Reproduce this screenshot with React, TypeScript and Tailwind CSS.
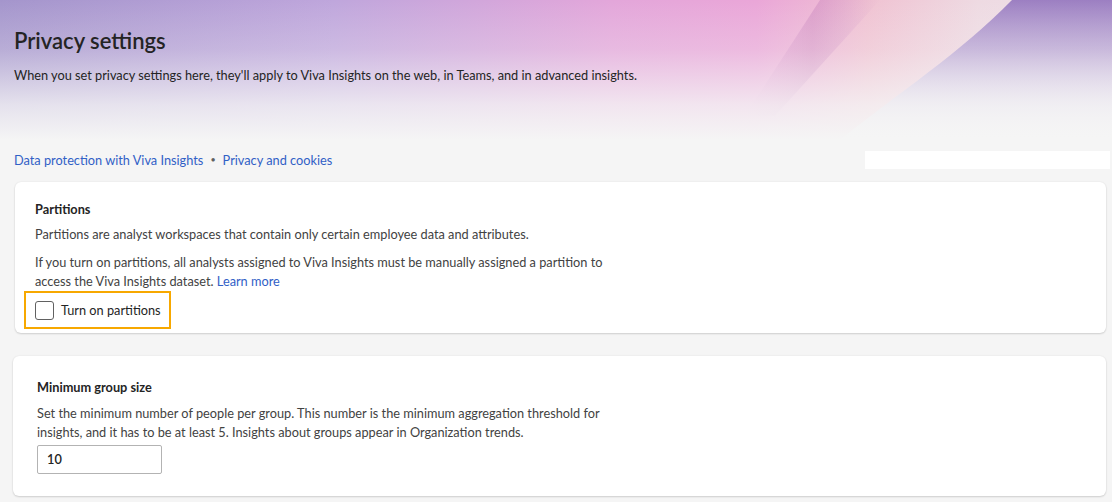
import React from "react";

function HeroBackground() {
  return (
    <svg
      className="absolute inset-0 h-full w-full"
      viewBox="0 0 1112 145"
      preserveAspectRatio="none"
      aria-hidden="true"
    >
      <defs>
        <linearGradient id="hx" x1="0" y1="0" x2="1" y2="0">
          <stop offset="0" stopColor="#a495cc" />
          <stop offset="0.3" stopColor="#bfa6dc" />
          <stop offset="0.55" stopColor="#e3a6da" />
          <stop offset="0.68" stopColor="#eaa6d8" />
          <stop offset="0.78" stopColor="#f0c2d2" />
          <stop offset="0.88" stopColor="#eedae2" />
          <stop offset="1" stopColor="#ece0e8" />
        </linearGradient>
        <linearGradient id="streak" x1="0" y1="0" x2="1" y2="0">
          <stop offset="0" stopColor="#c07cc0" stopOpacity="0" />
          <stop offset="0.5" stopColor="#c27ab8" stopOpacity="0.4" />
          <stop offset="1" stopColor="#c07cc0" stopOpacity="0" />
        </linearGradient>
        <linearGradient id="diag" x1="0" y1="0" x2="0" y2="1">
          <stop offset="0" stopColor="#9c7fc2" />
          <stop offset="0.5" stopColor="#c6b4da" />
          <stop offset="1" stopColor="#f2eff4" />
        </linearGradient>
        <linearGradient id="fade" x1="0" y1="0" x2="0" y2="1">
          <stop offset="0" stopColor="#f5f5f5" stopOpacity="0" />
          <stop offset="0.35" stopColor="#f5f5f5" stopOpacity="0.25" />
          <stop offset="0.75" stopColor="#f5f5f5" stopOpacity="0.8" />
          <stop offset="1" stopColor="#f5f5f5" stopOpacity="1" />
        </linearGradient>
      </defs>
      <rect x="0" y="0" width="1112" height="145" fill="url(#hx)" />
      <path d="M820 0 L880 0 L775 120 L745 120 Z" fill="url(#streak)" />
      <path
        d="M1012 0 L1112 0 L1112 145 L840 145 C 900 95, 960 55, 1012 0 Z"
        fill="url(#diag)"
      />
      <rect x="0" y="0" width="1112" height="145" fill="url(#fade)" />
    </svg>
  );
}

export default function App() {
  const font = { fontFamily: '"Segoe UI", Lato, "Open Sans", sans-serif' };
  return (
    <div
      className="min-h-[502px] w-[1112px] overflow-hidden bg-[#f5f5f5] text-[#242424]"
      style={font}
    >
      <header className="relative h-[140px]">
        <HeroBackground />
        <div className="relative px-[14px] pt-[27px]">
          <h1 className="text-[22px] font-semibold leading-[28px] text-[#242424]">
            Privacy settings
          </h1>
          <p className="mt-[12px] text-[12.75px] leading-[16px] text-[#242424]">
            When you set privacy settings here, they'll apply to Viva Insights on the web, in Teams, and in advanced insights.
          </p>
        </div>
      </header>

      <div className="mt-[11px] flex h-[18px] items-center justify-between pl-[14px] pr-[2px]">
        <div className="flex items-center text-[12.75px] leading-[16px] text-[#3160c6]">
          <span>Data protection with Viva Insights</span>
          <span className="mx-[7px] text-[9px] text-[#616161]">•</span>
          <span>Privacy and cookies</span>
        </div>
        <div className="h-[18px] w-[245px] bg-white" />
      </div>

      <section className="ml-[15px] mt-[13px] w-[1091px] rounded-[6px] bg-white pb-[4px] pl-[20px] pt-[19px] shadow-[0_1px_2px_rgba(0,0,0,0.14),0_0_2px_rgba(0,0,0,0.08)]">
        <h2 className="text-[12.75px] font-bold leading-[16px]">Partitions</h2>
        <p className="mt-[8px] text-[12.75px] leading-[19px] text-[#424242]">
          Partitions are analyst workspaces that contain only certain employee data and attributes.
        </p>
        <p className="mt-[9px] text-[12.75px] leading-[19px] text-[#424242]">
          If you turn on partitions, all analysts assigned to Viva Insights must be manually assigned a partition to
          <br />
          access the Viva Insights dataset. <span className="text-[#3160c6]">Learn more</span>
        </p>
        <div className="-ml-[11px] flex h-[38px] w-[147px] items-center border-2 border-[#f7a800] pl-[9px]">
          <span className="h-[19px] w-[19px] rounded-[3px] border border-[#616161] bg-white" />
          <span className="ml-[7px] text-[12.75px] leading-[16px] text-[#242424]">Turn on partitions</span>
        </div>
      </section>

      <section className="ml-[13px] mt-[23px] w-[1093px] rounded-[6px] bg-white pb-[22px] pl-[24px] pt-[23px] shadow-[0_1px_2px_rgba(0,0,0,0.14),0_0_2px_rgba(0,0,0,0.08)]">
        <h2 className="text-[12.75px] font-bold leading-[16px]">Minimum group size</h2>
        <p className="mt-[9px] text-[12.75px] leading-[19px] text-[#424242]">
          Set the minimum number of people per group. This number is the minimum aggregation threshold for
          <br />
          insights, and it has to be at least 5. Insights about groups appear in Organization trends.
        </p>
        <div className="mt-[3px] flex h-[29px] w-[125px] items-center rounded-[2px] border border-[#b3b3b3] bg-white pl-[9px] text-[12.75px] font-semibold text-[#242424]">
          10
        </div>
      </section>
    </div>
  );
}
